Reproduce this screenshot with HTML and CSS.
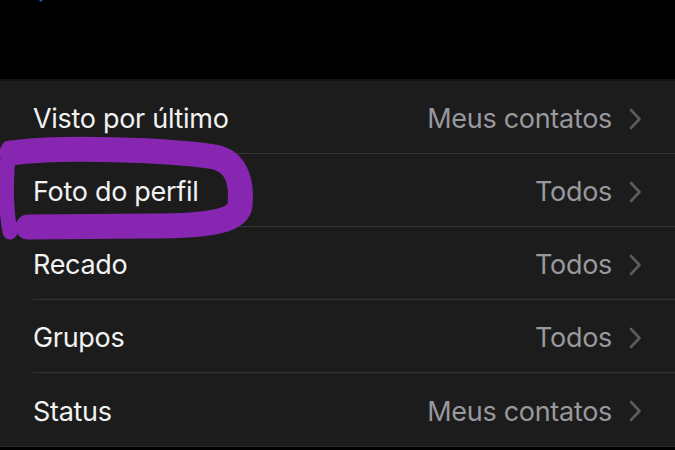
FILE: index.html
```html
<!DOCTYPE html>
<html lang="pt-BR">
<head>
    <meta charset="UTF-8">
    <meta name="viewport" content="width=device-width, initial-scale=1.0">
    <title>Privacidade</title>
    <link rel="stylesheet" href="styles.css">
</head>
<body>
    <div class="screen">
        <div class="navbar">
            <div class="nav-row">
                <span class="back">
                    <svg class="back-icon" width="14" height="24" viewBox="0 0 14 24"><path d="M11 2 L2 12 L11 22" fill="none" stroke="currentColor" stroke-width="3" stroke-linecap="round" stroke-linejoin="round"/></svg>
                    Conta
                </span>
                <span class="title">Privacidade</span>
            </div>
        </div>

        <div class="list">
            <div class="row">
                <span class="label">Visto por último</span>
                <span class="value">Meus contatos</span>
                <svg class="chevron" width="14" height="22" viewBox="0 0 14 22"><path d="M3 2 L11.5 11 L3 20" fill="none" stroke="currentColor" stroke-width="2.6" stroke-linecap="round" stroke-linejoin="round"/></svg>
            </div>
            <div class="row">
                <span class="label">Foto do perfil</span>
                <span class="value">Todos</span>
                <svg class="chevron" width="14" height="22" viewBox="0 0 14 22"><path d="M3 2 L11.5 11 L3 20" fill="none" stroke="currentColor" stroke-width="2.6" stroke-linecap="round" stroke-linejoin="round"/></svg>
            </div>
            <div class="row">
                <span class="label">Recado</span>
                <span class="value">Todos</span>
                <svg class="chevron" width="14" height="22" viewBox="0 0 14 22"><path d="M3 2 L11.5 11 L3 20" fill="none" stroke="currentColor" stroke-width="2.6" stroke-linecap="round" stroke-linejoin="round"/></svg>
            </div>
            <div class="row">
                <span class="label">Grupos</span>
                <span class="value">Todos</span>
                <svg class="chevron" width="14" height="22" viewBox="0 0 14 22"><path d="M3 2 L11.5 11 L3 20" fill="none" stroke="currentColor" stroke-width="2.6" stroke-linecap="round" stroke-linejoin="round"/></svg>
            </div>
            <div class="row">
                <span class="label">Status</span>
                <span class="value">Meus contatos</span>
                <svg class="chevron" width="14" height="22" viewBox="0 0 14 22"><path d="M3 2 L11.5 11 L3 20" fill="none" stroke="currentColor" stroke-width="2.6" stroke-linecap="round" stroke-linejoin="round"/></svg>
            </div>
        </div>

        <!-- marca feita a mão por cima da captura -->
        <svg class="scribble" width="675" height="450" viewBox="0 0 675 450">
            <path d="M9 148 C 5 180, 6 210, 10 232" fill="none" stroke="#8726b0" stroke-width="15" stroke-linecap="round"/>
            <path d="M12 153 C 60 146, 170 150, 215 157 C 238 162, 242 185, 240 205 C 238 220, 215 226, 150 226 L 28 227" fill="none" stroke="#8726b0" stroke-width="25" stroke-linecap="round" stroke-linejoin="round"/>
        </svg>
    </div>
</body>
</html>
```

FILE: styles.css
```css
*{
  margin: 0;
  padding: 0;
  box-sizing: border-box;
}

body{
  background-color: #000;
  font-family: Inter, "Noto Sans", sans-serif;
  width: 675px;
  height: 450px;
  overflow: hidden;
}

.screen{
  position: relative;
  width: 675px;
  height: 450px;
  overflow: hidden;
}

.navbar{
  height: 81px;
  border-bottom: 2px solid #111;
  overflow: hidden;
}

.nav-row{
  display: flex;
  align-items: center;
  height: 30px;
  margin-top: -25px;
  padding-left: 30px;
}

.back{
  display: flex;
  align-items: center;
  gap: 18px;
  color: #1d5fb0;
  font-size: 24px;
  width: 233px;
}

.title{
  color: #6a6a6a;
  font-size: 24px;
  font-weight: 600;
}

.list{
  background-color: #1c1c1c;
  border-bottom: 1px solid #2a2a2a;
}

.row{
  display: flex;
  align-items: center;
  height: 73px;
  margin-left: 33px;
  padding-top: 3px;
  padding-right: 33px;
  border-bottom: 1px solid #353537;
}

.row:last-child{
  border-bottom: none;
}

.label{
  flex: 1;
  color: #f2f2f2;
  font-size: 27px;
  letter-spacing: -0.3px;
}

.value{
  color: #98989d;
  font-size: 27px;
  letter-spacing: -0.3px;
  margin-right: 16px;
}

.chevron{
  color: #5c5c60;
}

.scribble{
  position: absolute;
  top: 0;
  left: 0;
  pointer-events: none;
}
```
